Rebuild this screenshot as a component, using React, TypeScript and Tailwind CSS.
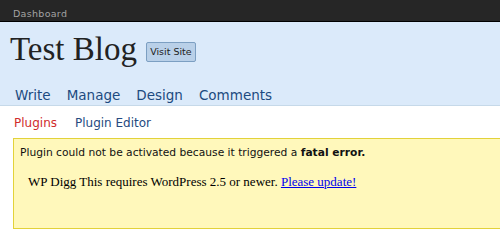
import React from "react";

export default function App() {
  return (
    <div className="w-[500px] h-[241px] overflow-hidden bg-white">
      {/* admin top bar */}
      <div className="h-[22px] bg-[#262626] border-b border-black pl-[13px] pt-[8px]">
        <span className="block text-[9.5px] leading-[11px] tracking-[0.3px] text-[#a3a3a3] font-['DejaVu_Sans',sans-serif]">
          Dashboard
        </span>
      </div>

      {/* blog header */}
      <div className="h-[84px] bg-[#dbeafa] border-b border-[#c6d9e9] pl-[10px] pt-[11px]">
        <div className="flex items-start">
          <h1 className="text-[33px] leading-[32px] text-[#222] font-['Liberation_Serif',serif]">
            Test Blog
          </h1>
          <button className="ml-[9px] mt-[9px] h-[20px] w-[50px] bg-[#b9d0e8] border border-[#7c9fc2] rounded-[2px] text-[9.5px] text-[#222] font-['DejaVu_Sans',sans-serif]">
            Visit Site
          </button>
        </div>
        <ul className="flex mt-[21px] pl-[5px] gap-[16px] text-[13.5px] leading-[19px] text-[#1d4a80] font-['DejaVu_Sans',sans-serif]">
          <li>Write</li>
          <li>Manage</li>
          <li>Design</li>
          <li>Comments</li>
        </ul>
      </div>

      {/* sub menu */}
      <ul className="flex pl-[14px] pt-[9px] gap-[18px] text-[12px] leading-[16px] font-['DejaVu_Sans',sans-serif]">
        <li className="text-[#d02c2c]">Plugins</li>
        <li className="text-[#264a80]">Plugin Editor</li>
      </ul>

      {/* error notice */}
      <div className="ml-[13px] mt-[7px] w-[600px] h-[91px] bg-[#fff8bb] border border-[#e2d23a]">
        <p className="pl-[6px] pt-[7px] text-[10.7px] leading-[14px] text-[#111] font-['DejaVu_Sans',sans-serif]">
          Plugin could not be activated because it triggered a <strong>fatal error.</strong>
        </p>
        <p className="pl-[14px] mt-[14px] text-[13px] leading-[16px] text-black font-['Liberation_Serif',serif]">
          WP Digg This requires WordPress 2.5 or newer.{" "}
          <a href="#" className="text-[#0000ee] underline">
            Please update!
          </a>
        </p>
      </div>
    </div>
  );
}
